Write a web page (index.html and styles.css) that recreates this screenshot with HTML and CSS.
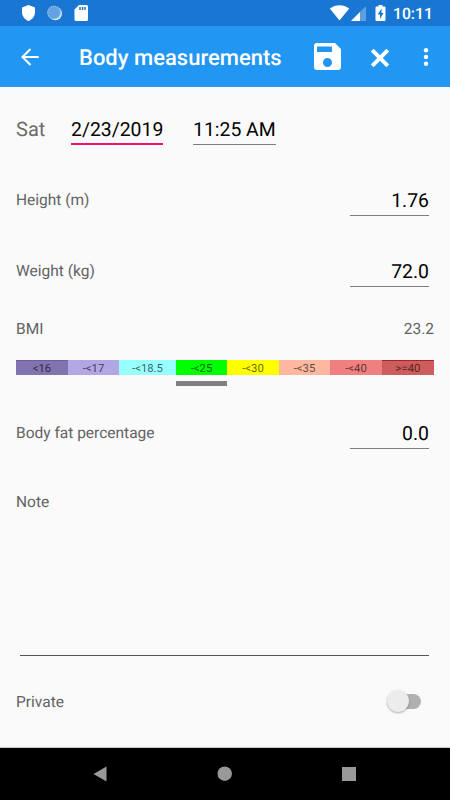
FILE: index.html
```html
<!DOCTYPE html>
<html lang="en">
<head>
    <meta charset="UTF-8">
    <meta name="viewport" content="width=device-width, initial-scale=1.0">
    <title>Body measurements</title>
    <link rel="stylesheet" href="styles.css">
</head>
<body>
    <div class="status-bar">
        <svg class="status-left" width="100" height="26" viewBox="0 0 100 26">
            <path fill="#fff" d="M28.500 5L35 7.500V12c0 4.300-2.700 7.600-6.500 9-3.800-1.400-6.500-4.700-6.500-9V7.500z"/>
            <circle cx="55.300" cy="13.500" r="6.700" fill="#e3eefa"/>
            <circle cx="54" cy="12.500" r="6.800" fill="#62a2e2"/>
            <circle cx="54" cy="12.500" r="6.300" fill="none" stroke="#b5d2f0" stroke-width="1" stroke-dasharray="1 1"/>
            <path fill="#fff" d="M79 5h7.500a1.500 1.500 0 0 1 1.500 1.500v13a1.500 1.500 0 0 1-1.500 1.500h-10.500a1.500 1.500 0 0 1-1.500-1.500V9.500z"/>
            <path stroke="#1976d2" stroke-width="1.500" d="M80 7v3M82.500 7v3M85 7v3"/>
        </svg>
        <svg class="status-right" width="60" height="26" viewBox="330 0 60 26">
            <path fill="#fff" d="M339.500 20.500L329.800 8.500c5.600-4.500 13.800-4.500 19.400 0z"/>
            <path fill="#5e9fe0" d="M366 6v15h-15z"/>
            <path fill="#fff" d="M360 12v9h-9z"/>
            <path fill="#fff" d="M378.500 5h4v1.500h2q1 0 1 1V20q0 1-1 1h-8q-1 0-1-1V7.500q0-1 1-1h2z"/>
            <path fill="#1976d2" d="M381.500 8.500l-3.800 6h2.300v4.500l3.500-6h-2z"/>
        </svg>
        <span class="clock">10:11</span>
    </div>

    <div class="toolbar">
        <svg class="back" width="18" height="18" viewBox="0 0 18 18">
            <path fill="none" stroke="#fff" stroke-width="2" d="M17.700 9H2M9.500 1L1.500 9l8 8"/>
        </svg>
        <h1>Body measurements</h1>
        <svg class="save" width="27" height="27" viewBox="0 0 27 27">
            <path fill="#fff" fill-rule="evenodd" d="M3 0h18l6 6v18a3 3 0 0 1-3 3H3a3 3 0 0 1-3-3V3a3 3 0 0 1 3-3zM3 3.500V9h15V3.500zM13.500 15a4.500 4.500 0 1 0 0 9 4.500 4.500 0 0 0 0-9z"/>
        </svg>
        <svg class="cancel" width="20" height="20" viewBox="0 0 20 20">
            <path stroke="#fff" stroke-width="4" d="M2.200 2.200l15.600 15.600M17.800 2.200L2.200 17.800"/>
        </svg>
        <svg class="more" width="6" height="20" viewBox="0 0 6 20">
            <g fill="#fff">
                <circle cx="3" cy="3.300" r="2.200"/>
                <circle cx="3" cy="10" r="2.200"/>
                <circle cx="3" cy="16.700" r="2.200"/>
            </g>
        </svg>
    </div>

    <div class="form">
        <div class="row date-row">
            <span class="day">Sat</span>
            <span class="field date focused">2/23/2019</span>
            <span class="field time">11:25 AM</span>
        </div>
        <div class="row">
            <span class="label">Height (m)</span>
            <span class="field number">1.76</span>
        </div>
        <div class="row">
            <span class="label">Weight (kg)</span>
            <span class="field number">72.0</span>
        </div>
        <div class="row bmi-row">
            <span class="label">BMI</span>
            <span class="label">23.2</span>
        </div>
        <div class="scale">
            <span class="range severe-under">&lt;16</span>
            <span class="range under">-&lt;17</span>
            <span class="range mild-under">-&lt;18.5</span>
            <span class="range normal">-&lt;25</span>
            <span class="range over">-&lt;30</span>
            <span class="range obese-1">-&lt;35</span>
            <span class="range obese-2">-&lt;40</span>
            <span class="range obese-3">&gt;=40</span>
            <span class="marker"></span>
        </div>
        <div class="row">
            <span class="label">Body fat percentage</span>
            <span class="field number">0.0</span>
        </div>
        <div class="note">
            <span class="label">Note</span>
        </div>
        <div class="row private-row">
            <span class="label">Private</span>
            <span class="switch"><span class="thumb"></span></span>
        </div>
    </div>

    <div class="nav-bar">
        <svg width="22" height="22" viewBox="0 0 22 22"><path fill="#999" d="M3.500 11L16.500 3.500v15z"/></svg>
        <svg width="22" height="22" viewBox="0 0 22 22"><circle fill="#999" cx="10.700" cy="10.700" r="7.200"/></svg>
        <svg width="22" height="22" viewBox="0 0 22 22"><rect fill="#999" x="4" y="4" width="14" height="14"/></svg>
    </div>
</body>
</html>
```

FILE: styles.css
```css
* {
    box-sizing: border-box;
}
body {
    margin: 0;
    width: 450px;
    height: 800px;
    display: flex;
    flex-direction: column;
    overflow: hidden;
    font-family: Roboto, sans-serif;
    text-rendering: geometricPrecision;
    background: #fafafa;
    color: #000;
}
svg {
    display: block;
    flex: none;
}
.status-bar {
    display: flex;
    align-items: center;
    height: 26px;
    background: #1976d2;
    color: #fff;
}
.status-right {
    margin-left: auto;
    overflow: visible;
}
.clock {
    width: 60px;
    padding: 2px 0 0 3px;
    font-size: 15.7px;
    font-weight: 500;
    line-height: 20px;
}
.toolbar {
    display: flex;
    align-items: center;
    height: 61px;
    padding: 0 21px;
    background: #2196f3;
    color: #fff;
}
.toolbar h1 {
    width: 235px;
    margin: 4px 0 0 40px;
    font-size: 22px;
    font-weight: 500;
    line-height: 28px;
    white-space: nowrap;
}
.cancel {
    margin-left: 29px;
    margin-top: 2px;
}
.more {
    margin-left: 33px;
}
.form {
    height: 661px;
    padding: 6px 16px 0;
    border-bottom: 1px solid #c4c4c4;
}
.row {
    display: flex;
    align-items: center;
    justify-content: space-between;
    height: 71px;
}
.date-row {
    justify-content: flex-start;
}
.day {
    width: 55px;
    padding-top: 1px;
    font-size: 20px;
    color: #6b6b6b;
}
.label {
    padding-top: 1px;
    font-size: 15.5px;
    line-height: 20px;
    color: #636363;
}
.field {
    height: 32px;
    padding-top: 5px;
    border-bottom: 1px solid #7d7d7d;
    font-size: 19.4px;
    line-height: 24px;
    white-space: nowrap;
}
.focused {
    border-bottom: 2px solid #f50d70;
}
.date {
    width: 92px;
}
.time {
    width: 83px;
    margin-left: 30px;
}
.number {
    width: 79px;
    margin-right: 5px;
    text-align: right;
}
.bmi-row {
    height: 44px;
}
.scale {
    display: grid;
    grid-template-columns: 52px 51px 57px 51px 52px 51px 52px 52px;
    grid-template-rows: 15px 5px;
    row-gap: 6px;
    height: 47px;
    padding-top: 10px;
}
.range {
    font-size: 11.3px;
    line-height: 17px;
    text-align: center;
    color: rgba(0, 0, 0, 0.65);
}
.severe-under {
    background: #8174ae;
    box-shadow: inset 0 1px #6c5f9f;
}
.under {
    background: #b2a7e4;
}
.mild-under {
    background: #98ffff;
}
.normal {
    background: #00ff00;
}
.over {
    background: #ffff00;
}
.obese-1 {
    background: #ffb8a0;
}
.obese-2 {
    background: #f08080;
}
.obese-3 {
    background: #cd5c5c;
    box-shadow: inset 0 1px #b22222;
}
.marker {
    grid-column: 4;
    background: #808080;
}
.note {
    height: 187px;
    margin: 1px 0 0;
    padding-top: 23px;
    background: linear-gradient(#555, #555) 4px 100% / 409px 1px no-repeat;
}
.private-row {
    height: 91px;
}
.switch {
    width: 34px;
    height: 15px;
    margin-right: 13px;
    border-radius: 8px;
    background: #b0b0b0;
}
.thumb {
    display: block;
    width: 22px;
    height: 22px;
    margin-top: -4px;
    border-radius: 50%;
    background: #ececec;
    box-shadow: 0 1px 2px rgba(0, 0, 0, 0.3);
}
.nav-bar {
    display: flex;
    align-items: center;
    justify-content: space-between;
    flex: 1;
    padding: 0 90px;
    background: #000;
}
```
